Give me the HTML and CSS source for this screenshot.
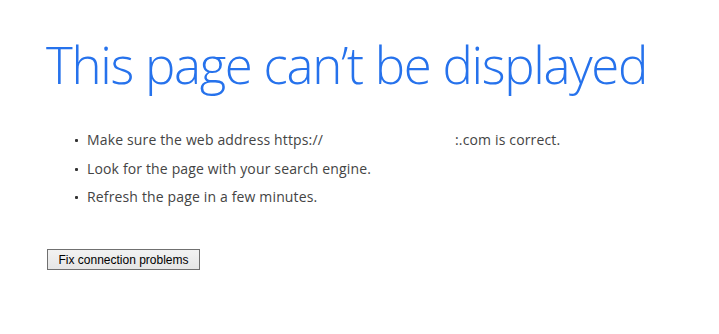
FILE: index.html
```html
<!DOCTYPE html>
<html>
<head>
<meta charset="utf-8">
<link rel="stylesheet" href="styles.css">
</head>
<body>
<main class="page">
  <h1 class="title">This page can’t be displayed</h1>
  <ul class="tips">
    <li>Make sure the web address https://<span class="redacted"></span>:.com is correct.</li>
    <li>Look for the page with your search engine.</li>
    <li>Refresh the page in a few minutes.</li>
  </ul>
  <button class="fix" type="button">Fix connection problems</button>
</main>
</body>
</html>
```
FILE: styles.css
```css
html, body {
  margin: 0;
  padding: 0;
  background: #ffffff;
}
.page {
  padding: 29px 0 0 46px;
  display: flex;
  flex-direction: column;
  align-items: flex-start;
}
.title {
  margin: 0;
  font-family: "Open Sans", "Noto Sans", sans-serif;
  font-weight: 300;
  font-size: 51px;
  line-height: 70px;
  color: #2672ec;
  letter-spacing: -1.3px;
}
.tips {
  margin: 27px 0 0 1px;
  padding: 0 0 0 40px;
  list-style: none;
  font-family: "Open Sans", "Noto Sans", sans-serif;
  font-size: 14px;
  letter-spacing: 0.15px;
  line-height: 28.7px;
  color: #444444;
}
.tips li {
  position: relative;
}
.tips li::before {
  content: "";
  position: absolute;
  left: -12px;
  top: 13px;
  width: 3px;
  height: 3px;
  border-radius: 1px;
  background: #333333;
}
.redacted {
  display: inline-block;
  width: 132px;
  height: 1px;
}
.fix {
  margin: 37px 0 0 1px;
  width: 153px;
  height: 21px;
  padding: 0;
  font-family: "Liberation Sans", Arial, sans-serif;
  font-size: 12px;
  color: #000000;
  background: linear-gradient(#f2f2f2, #e6e6e6);
  border: 1px solid #707070;
  border-radius: 0;
}
```
